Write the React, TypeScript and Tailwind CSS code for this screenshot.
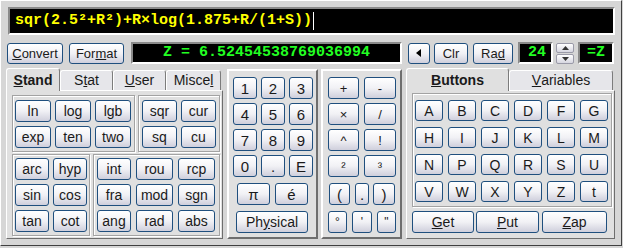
import React from 'react';

type P = { c: string; children?: React.ReactNode };

// XP-ish push button
function Btn({ c, children }: P) {
  return (
    <div
      className={`flex items-center justify-center rounded-[3px] border border-[#1f4f7e] bg-linear-to-b from-white via-[#f1f1f5] to-[#cfcfdc] text-[#1a1a1a] leading-none ${c}`}
    >
      {children}
    </div>
  );
}

function Group({ c, children }: P) {
  return (
    <div className={`border border-[#a3a3a3] shadow-[inset_1px_1px_0_#ffffff,1px_1px_0_#ffffff] ${c}`}>
      {children}
    </div>
  );
}

function Tab({ active, c, children }: { active?: boolean; c: string; children: React.ReactNode }) {
  return (
    <div
      className={`flex items-center justify-center rounded-t-[3px] border-t border-l border-r border-t-white border-l-white border-r-[#7c7c7c] ${
        active ? 'relative z-10 -mb-px h-[23px] bg-[#e0e0e0] font-bold text-[14px]' : 'h-[20px] bg-[#e6e6ea] text-[14px]'
      } text-[#1a1a1a] ${c}`}
    >
      {children}
    </div>
  );
}

const page = 'border border-t-white border-l-white border-r-[#6e6e6e] border-b-[#6e6e6e] bg-[#e0e0e0]';

function App() {
  return (
    <div className="w-[623px] h-[248px] bg-[#d6d6d6] font-['Liberation_Sans',Arial,sans-serif] select-none overflow-hidden">
      <div className="w-[622px] h-[246px] border border-t-white border-l-white border-r-[#404040] border-b-[#404040]">
        {/* expression */}
        <div className="ml-[7px] mt-[6px] w-[607px] h-[28px] border-2 border-t-[#8a8a8a] border-l-[#8a8a8a] border-r-white border-b-white bg-black flex items-center pl-[5px]">
          <span className="font-['Liberation_Mono',monospace] font-bold text-[15px] text-[#ffff00] tracking-[0px]">
            sqr(2.5²+R²)+R×log(1.875+R/(1+S))
          </span>
          <span className="ml-px w-px h-[18px] bg-white" />
        </div>

        {/* result row */}
        <div className="flex items-center mt-[7px] ml-[6px] h-[22px]">
          <Btn c="w-[56px] h-[21px] text-[13px]">
            <u>C</u>onvert
          </Btn>
          <Btn c="ml-[6px] w-[55px] h-[21px] text-[13px]">
            For<u>m</u>at
          </Btn>
          <div className="ml-[7px] w-[271px] h-[22px] border-2 border-t-[#8a8a8a] border-l-[#8a8a8a] border-r-white border-b-white bg-black flex items-center pl-[30px] font-['Liberation_Mono',monospace] font-bold text-[15px] text-[#22ff22] whitespace-pre">
            Z = 6.52454538769036994
          </div>
          <Btn c="ml-[6px] w-[22px] h-[21px]">
            <svg width="6" height="8" viewBox="0 0 6 8">
              <polygon points="5,0 5,8 0,4" fill="#000" />
            </svg>
          </Btn>
          <Btn c="ml-[4px] w-[34px] h-[21px] text-[13px]">Clr</Btn>
          <Btn c="ml-[5px] w-[40px] h-[21px] text-[13px]">
            Ra<u>d</u>
          </Btn>
          <div className="ml-[5px] w-[35px] h-[22px] border-2 border-t-[#8a8a8a] border-l-[#8a8a8a] border-r-white border-b-white bg-black flex items-center justify-end pr-[5px] font-['Liberation_Mono',monospace] font-bold text-[15px] text-[#22ff22]">
            24
          </div>
          <div className="ml-[3px] w-[18px] h-[21px] flex flex-col gap-px">
            <div className="flex-1 flex items-center justify-center rounded-[2px] border border-[#9a9aa8] bg-linear-to-b from-white to-[#d6d6e0]">
              <svg width="7" height="4" viewBox="0 0 7 4">
                <polygon points="0,4 7,4 3.5,0" fill="#333" />
              </svg>
            </div>
            <div className="flex-1 flex items-center justify-center rounded-[2px] border border-[#9a9aa8] bg-linear-to-b from-white to-[#d6d6e0]">
              <svg width="7" height="4" viewBox="0 0 7 4">
                <polygon points="0,0 7,0 3.5,4" fill="#333" />
              </svg>
            </div>
          </div>
          <div className="ml-[4px] w-[36px] h-[22px] border-2 border-t-[#8a8a8a] border-l-[#8a8a8a] border-r-white border-b-white bg-black flex items-center justify-center font-['Liberation_Mono',monospace] font-bold text-[15px] text-[#22ff22]">
            =Z
          </div>
        </div>

        {/* keypad area */}
        <div className="flex mt-[5px] ml-[5px]">
          {/* left tab control */}
          <div className="w-[217px] flex flex-col">
            <div className="flex items-end h-[21px]">
              <Tab active c="w-[54px]">
                <u>S</u>tand
              </Tab>
              <Tab c="w-[53px]">
                S<u>t</u>at
              </Tab>
              <Tab c="w-[53px]">
                <u>U</u>ser
              </Tab>
              <Tab c="w-[55px]">
                Misce<u>l</u>
              </Tab>
            </div>
            <div className={`h-[149px] ${page} pl-[5px] pt-[4px] flex flex-col gap-[2px]`}>
              <div className="flex gap-[3px]">
                <Group c="w-[123px] h-[57px] pt-[4px] pl-[2px] flex flex-col gap-[4px]">
                  <div className="flex gap-[4px] text-[14px]">
                    <Btn c="w-[36px] h-[22px]">ln</Btn>
                    <Btn c="w-[36px] h-[22px]">log</Btn>
                    <Btn c="w-[36px] h-[22px]">lgb</Btn>
                  </div>
                  <div className="flex gap-[4px] text-[14px]">
                    <Btn c="w-[36px] h-[22px]">exp</Btn>
                    <Btn c="w-[36px] h-[22px]">ten</Btn>
                    <Btn c="w-[36px] h-[22px]">two</Btn>
                  </div>
                </Group>
                <Group c="w-[82px] h-[57px] pt-[4px] pl-[3px] flex flex-col gap-[4px]">
                  <div className="flex gap-[4px] text-[14px]">
                    <Btn c="w-[35px] h-[22px]">sqr</Btn>
                    <Btn c="w-[35px] h-[22px]">cur</Btn>
                  </div>
                  <div className="flex gap-[4px] text-[14px]">
                    <Btn c="w-[35px] h-[22px]">sq</Btn>
                    <Btn c="w-[35px] h-[22px]">cu</Btn>
                  </div>
                </Group>
              </div>
              <div className="flex gap-[3px]">
                <Group c="w-[78px] h-[82px] pt-[3px] pl-[2px] flex flex-col gap-[4px]">
                  {[
                    ['arc', 'hyp'],
                    ['sin', 'cos'],
                    ['tan', 'cot'],
                  ].map((r) => (
                    <div key={r[0]} className="flex gap-[4px] text-[14px]">
                      <Btn c="w-[34px] h-[22px]">{r[0]}</Btn>
                      <Btn c="w-[34px] h-[22px]">{r[1]}</Btn>
                    </div>
                  ))}
                </Group>
                <Group c="w-[127px] h-[82px] pt-[3px] pl-[3px] flex flex-col gap-[4px]">
                  {[
                    ['int', 'rou', 'rcp'],
                    ['fra', 'mod', 'sgn'],
                    ['ang', 'rad', 'abs'],
                  ].map((r) => (
                    <div key={r[0]} className="flex gap-[5px] text-[14px]">
                      <Btn c="w-[34px] h-[22px]">{r[0]}</Btn>
                      <Btn c="w-[37px] h-[22px]">{r[1]}</Btn>
                      <Btn c="w-[37px] h-[22px]">{r[2]}</Btn>
                    </div>
                  ))}
                </Group>
              </div>
            </div>
          </div>

          {/* digits */}
          <div className={`ml-[4px] w-[91px] h-[170px] ${page} border-2 pl-[4px] pt-[6px]`}>
            <div className="grid grid-cols-[24px_24px_24px] gap-x-[4px] gap-y-[4px] text-[15px]">
              {['1', '2', '3', '4', '5', '6', '7', '8', '9', '0', '.', 'E'].map((k) => (
                <Btn key={k} c="w-[24px] h-[22px]">
                  {k}
                </Btn>
              ))}
            </div>
            <div className="flex gap-[5px] mt-[6px] ml-[4px] text-[15px]">
              <Btn c="w-[33px] h-[22px]">π</Btn>
              <Btn c="w-[33px] h-[22px]">é</Btn>
            </div>
            <Btn c="mt-[6px] ml-[3px] w-[72px] h-[22px] text-[14px]">
              Ph<u>y</u>sical
            </Btn>
          </div>

          {/* operators */}
          <div className={`ml-[3px] w-[81px] h-[170px] ${page} border-2 pl-[5px] pt-[6px]`}>
            <div className="grid grid-cols-[31px_32px] gap-x-[5px] gap-y-[4px] text-[13px]">
              {['+', '-', '×', '/', '^', '!', '²', '³'].map((k) => (
                <Btn key={k} c="w-full h-[22px]">
                  {k}
                </Btn>
              ))}
            </div>
            <div className="flex mt-[6px] ml-[1px] text-[15px]">
              <Btn c="w-[21px] h-[22px]">(</Btn>
              <Btn c="ml-[5px] w-[14px] h-[22px]">.</Btn>
              <Btn c="ml-[4px] w-[22px] h-[22px]">)</Btn>
            </div>
            <div className="flex mt-[6px] text-[12px]">
              <Btn c="w-[19px] h-[22px]">°</Btn>
              <Btn c="ml-[5px] w-[20px] h-[22px]">'</Btn>
              <Btn c="ml-[5px] w-[19px] h-[22px]">"</Btn>
            </div>
          </div>

          {/* right tab control */}
          <div className="ml-[4px] w-[209px] flex flex-col">
            <div className="flex items-end h-[21px]">
              <Tab active c="w-[103px]">
                <u>B</u>uttons
              </Tab>
              <Tab c="w-[104px]">
                <u>V</u>ariables
              </Tab>
            </div>
            <div className={`h-[149px] ${page} pl-[5px] pt-[2px]`}>
              <Group c="w-[200px] h-[114px] pt-[6px] pl-[2px] flex flex-col gap-[6px]">
                {[
                  ['A', 'B', 'C', 'D', 'F', 'G'],
                  ['H', 'I', 'J', 'K', 'L', 'M'],
                  ['N', 'P', 'Q', 'R', 'S', 'U'],
                  ['V', 'W', 'X', 'Y', 'Z', 't'],
                ].map((r) => (
                  <div key={r[0]} className="flex gap-[5px] text-[14px]">
                    {r.map((k) => (
                      <Btn key={k} c="w-[28px] h-[21px]">
                        {k}
                      </Btn>
                    ))}
                  </div>
                ))}
              </Group>
              <div className="flex mt-[4px] text-[14px]">
                <Btn c="w-[62px] h-[22px]">
                  <u>G</u>et
                </Btn>
                <Btn c="ml-[2px] w-[63px] h-[22px]">
                  <u>P</u>ut
                </Btn>
                <Btn c="ml-[3px] w-[65px] h-[22px]">
                  <u>Z</u>ap
                </Btn>
              </div>
            </div>
          </div>
        </div>
      </div>
    </div>
  );
}

export default App;
